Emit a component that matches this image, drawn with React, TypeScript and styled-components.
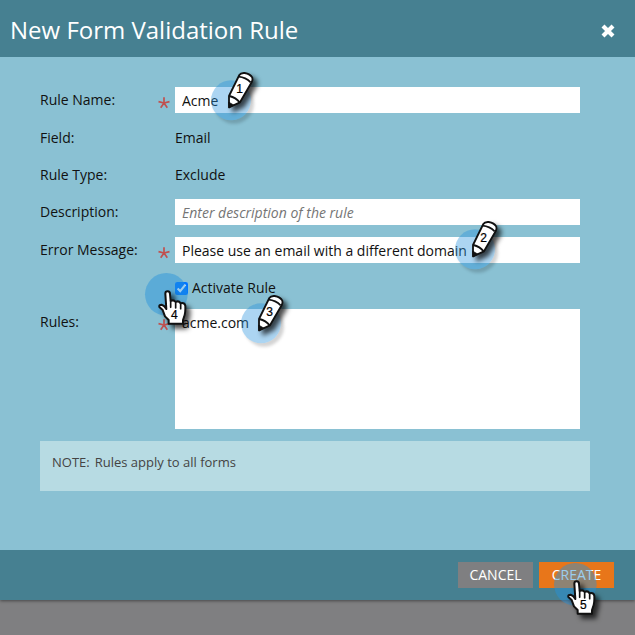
import React from "react";
import styled, { createGlobalStyle } from "styled-components";

const GlobalStyle = createGlobalStyle`
  * { box-sizing: border-box; }
  body { margin: 0; background: #7f7f81; overflow: hidden; }
  button, input, textarea { font-family: "Open Sans", sans-serif; }
`;

const Page = styled.div`
  position: relative;
  width: 635px;
  height: 635px;
  background: #7f7f81;
  font-family: "Open Sans", "Noto Sans", sans-serif;
  font-size: 14px;
  color: #111;
`;

const Dialog = styled.section`
  display: flex;
  flex-direction: column;
  height: 600px;
  box-shadow: 0 1px 3px rgba(0, 0, 0, 0.45);
`;

const Header = styled.header`
  display: flex;
  align-items: center;
  justify-content: space-between;
  height: 57px;
  padding: 3px 20px 0 10px;
  background: #468091;
  color: #fff;
`;

const Title = styled.h1`
  margin: 0;
  font-size: 24px;
  font-weight: 400;
  line-height: 32px;
`;

const CloseButton = styled.button`
  display: flex;
  padding: 2px 0 0;
  border: 0;
  background: none;
`;

const Body = styled.div`
  flex: 1;
  padding: 30px 45px 0 40px;
  background: #8ac1d3;
`;

const Form = styled.div`
  display: grid;
  grid-template-rows: 38px 37px 37px 38px 38px 34px 120px;
  width: 540px;
`;

const Row = styled.div`
  display: grid;
  grid-template-columns: 118px 17px 405px;
  align-items: start;
`;

const Label = styled.label`
  line-height: 26px;
`;

const Value = styled.span`
  line-height: 26px;
`;

const Required = styled.svg`
  width: 12px;
  height: 12px;
  margin-top: 10px;
`;

const TextInput = styled.input`
  width: 405px;
  height: 26px;
  padding: 1px 7px;
  border: 0;
  background: #fff;
  color: #111;
  font-size: 14px;
  &::placeholder { color: #757575; font-style: italic; }
`;

const TextArea = styled.textarea`
  display: block;
  width: 405px;
  height: 120px;
  padding: 4px 7px;
  border: 0;
  background: #fff;
  color: #111;
  font-size: 14px;
  line-height: 20px;
  resize: none;
`;

const CheckLabel = styled.label`
  display: flex;
  align-items: center;
  gap: 4px;
  height: 24px;
`;

const Checkbox = styled.input`
  width: 13px;
  height: 13px;
  margin: 3px 0 0;
`;

const Note = styled.div`
  width: 550px;
  height: 50px;
  margin-top: 12px;
  padding: 12px;
  background: #b7dbe3;
  color: #444;
  font-size: 13px;
  line-height: 18px;
`;

const NoteTitle = styled.span`
  margin-right: 5px;
`;

const Footer = styled.footer`
  display: flex;
  justify-content: flex-end;
  gap: 6px;
  height: 50px;
  padding: 12px 21px 0;
  background: #468091;
`;

const Button = styled.button<{ $primary?: boolean }>`
  width: 75px;
  height: 26px;
  padding: 0;
  border: 0;
  background: ${({ $primary }) => ($primary ? "#e8761a" : "#7f7f81")};
  color: #fff;
  font-size: 14px;
  line-height: 26px;
`;

const Marker = styled.svg<{ $x: number; $y: number }>`
  position: absolute;
  left: ${({ $x }) => $x}px;
  top: ${({ $y }) => $y}px;
  width: 70px;
  height: 75px;
  overflow: visible;
  pointer-events: none;
`;

const Numeral = styled.text`
  font-family: "Liberation Sans", Arial, sans-serif;
  font-size: 36px;
  text-anchor: middle;
  fill: #000;
  stroke: #000;
  stroke-width: 0.7px;
`;

interface StepProps {
  x: number;
  y: number;
  step: number;
}

function ShadowFilter({ id }: { id: string }) {
  return (
    <filter id={id} x="-50%" y="-50%" width="220%" height="220%" colorInterpolationFilters="sRGB">
      <feDropShadow dx="12" dy="12" stdDeviation="8" floodColor="#000" floodOpacity=".7" />
    </filter>
  );
}

function Halo({ cx, cy, r, opacity }: { cx: number; cy: number; r: number; opacity: number }) {
  return (
    <g opacity={opacity}>
      <circle cx={cx} cy={cy} r={r} fill="#2491dc" />
    </g>
  );
}

function HaloShadow({ id, cx, cy, r }: { id: string; cx: number; cy: number; r: number }) {
  return (
    <>
      <filter id={id} x="-50%" y="-50%" width="220%" height="220%">
        <feGaussianBlur stdDeviation="5" />
      </filter>
      <mask id={`${id}-mask`} maskUnits="userSpaceOnUse" x="-30" y="-30" width="300" height="300">
        <rect x="-30" y="-30" width="300" height="300" fill="#fff" />
        <circle cx={cx} cy={cy} r={r} fill="#000" />
      </mask>
      <g mask={`url(#${id}-mask)`}>
        <circle cx={cx + 9} cy={cy + 10} r={r} fill="#000" fillOpacity=".17" filter={`url(#${id})`} />
      </g>
    </>
  );
}

function Pencil({ x, y, step }: StepProps) {
  const id = `pencil-${step}`;
  return (
    <Marker $x={x} $y={y} viewBox="0 0 210 225">
      <ShadowFilter id={id} />
      <HaloShadow id={`${id}-halo`} cx={93} cy={106} r={60} />
      <Halo cx={93} cy={106} r={60} opacity={0.38} />
      <g filter={`url(#${id})`}>
        <path d="M87 93L118 30Q122 23 134 24Q151 27 157 38Q159 44 155 52L120 112L87 127Z" fill="#fff" stroke="#111" strokeWidth="5.5" strokeLinejoin="round" />
        <path d="M116 35Q137 37 152 52M88 93Q108 98 119 112" fill="none" stroke="#111" strokeWidth="5.5" />
        <path d="M86 111L101 120L87 129Z" fill="#111" stroke="#111" strokeWidth="2" />
      </g>
      <Numeral x="119" y="84">{step}</Numeral>
    </Marker>
  );
}

function Hand({ x, y, step }: StepProps) {
  const id = `hand-${step}`;
  return (
    <Marker $x={x} $y={y} viewBox="0 0 210 225">
      <ShadowFilter id={id} />
      <Halo cx={79} cy={88} r={64} opacity={0.46} />
      <g filter={`url(#${id})`}>
        <path d="M76 86Q76 79 83 79Q90 79 90 87L92 108Q101 103 107 111Q116 106 122 115Q133 112 136 122Q137 144 132 156L129 165L129 176L86 176L86 165L75 154L68 135L58 126Q56 119 65 119Q73 121 79 132Z" fill="#fff" stroke="#111" strokeWidth="6" strokeLinejoin="round" />
        <path d="M92 107V127M107 111V129M122 115V131" fill="none" stroke="#111" strokeWidth="5" strokeLinecap="round" />
      </g>
      <Numeral x="103" y="162">{step}</Numeral>
    </Marker>
  );
}

function Asterisk() {
  return (
    <Required viewBox="0 0 12 12" aria-label="required">
      <path d="M6 6V.3M6 6L.5 4.7M6 6L11.5 4.7M6 6L2.7 10.7M6 6L9.3 10.7" stroke="#c0504f" strokeWidth="1.7" />
    </Required>
  );
}

interface FieldProps {
  label?: string;
  required?: boolean;
  children: React.ReactNode;
}

function Field({ label, required, children }: FieldProps) {
  return (
    <Row>
      <Label>{label}</Label>
      {required ? <Asterisk /> : <span />}
      {children}
    </Row>
  );
}

export default function App() {
  return (
    <>
      <GlobalStyle />
      <Page>
        <Dialog role="dialog">
          <Header>
            <Title>New Form Validation Rule</Title>
            <CloseButton aria-label="Close">
              <svg width="14" height="14" viewBox="0 0 14 14">
                <path d="M2 2L12 12M12 2L2 12" stroke="#fff" strokeWidth="4.2" />
              </svg>
            </CloseButton>
          </Header>
          <Body>
            <Form>
              <Field label="Rule Name:" required><TextInput defaultValue="Acme" /></Field>
              <Field label="Field:"><Value>Email</Value></Field>
              <Field label="Rule Type:"><Value>Exclude</Value></Field>
              <Field label="Description:"><TextInput placeholder="Enter description of the rule" /></Field>
              <Field label="Error Message:" required>
                <TextInput defaultValue="Please use an email with a different domain" />
              </Field>
              <Field>
                <CheckLabel><Checkbox type="checkbox" defaultChecked />Activate Rule</CheckLabel>
              </Field>
              <Field label="Rules:" required><TextArea defaultValue="acme.com" /></Field>
            </Form>
            <Note><NoteTitle>NOTE:</NoteTitle>Rules apply to all forms</Note>
          </Body>
          <Footer>
            <Button>CANCEL</Button>
            <Button $primary>CREATE</Button>
          </Footer>
        </Dialog>
        <Pencil x={200} y={65} step={1} />
        <Pencil x={444} y={214} step={2} />
        <Pencil x={230} y={288} step={3} />
        <Hand x={140} y={265} step={4} />
        <Hand x={549} y={555} step={5} />
      </Page>
    </>
  );
}
